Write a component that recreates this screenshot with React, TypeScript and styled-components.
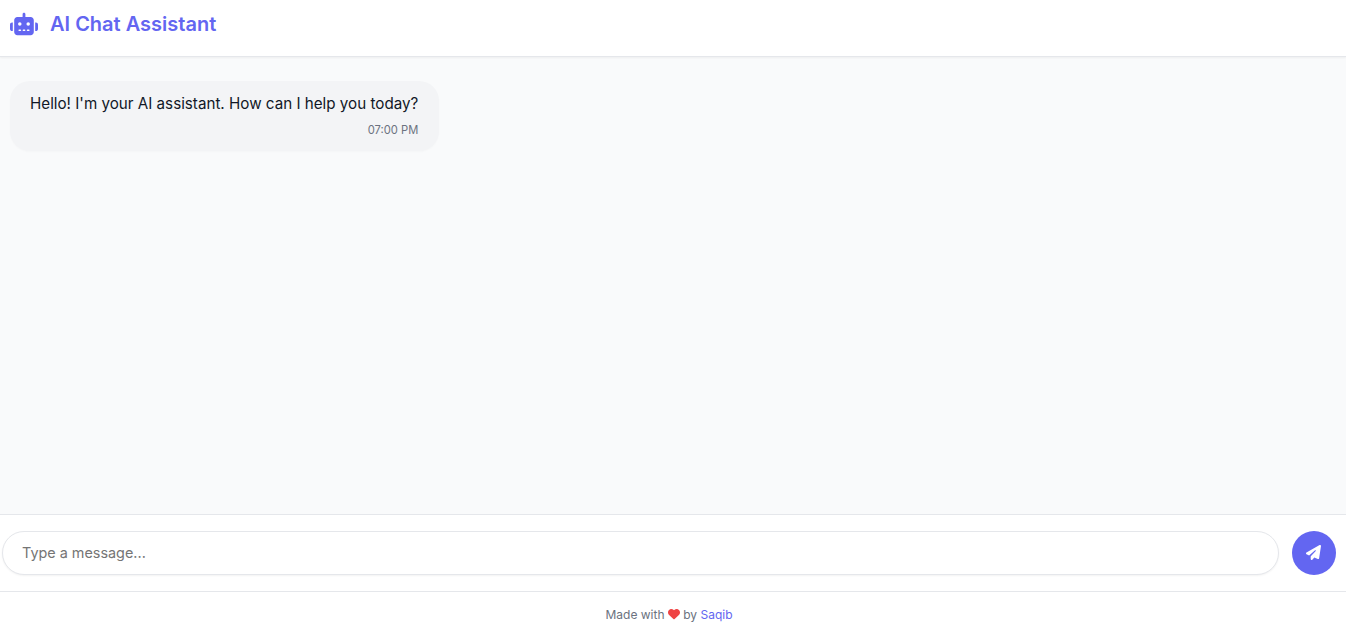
import React from "react"
import styled, { createGlobalStyle } from "styled-components"
import { FaRobot, FaPaperPlane, FaHeart } from "react-icons/fa6"

const GlobalStyle = createGlobalStyle`
  html, body {
    margin: 0;
    padding: 0;
    height: 100%;
    overflow: hidden;
    background: #ffffff;
    font-family: "Inter", "Liberation Sans", sans-serif;
  }
  * {
    box-sizing: border-box;
  }
`

const Page = styled.div`
  display: flex;
  flex-direction: column;
  height: 627px;
`

const Header = styled.header`
  display: flex;
  align-items: center;
  gap: 12px;
  flex: 0 0 57px;
  padding: 0 10px 9px;
  background: #ffffff;
  border-bottom: 1px solid #e5e7eb;
  box-shadow: 0 1px 2px rgba(0, 0, 0, 0.05);
  color: #6366f1;
  position: relative;
`

const Title = styled.h1`
  margin: 0;
  font-size: 20px;
  font-weight: 600;
  color: #6366f1;
`

const Messages = styled.main`
  flex: 1;
  padding: 24px 10px;
  background: #f9fafb;
`

const Bubble = styled.div`
  display: inline-block;
  padding: 12px 21px 12px 20px;
  background: #f3f4f6;
  border-radius: 20px;
  box-shadow: 0 1px 2px rgba(0, 0, 0, 0.02);
`

const MessageText = styled.div`
  font-size: 15.2px;
  line-height: 22px;
  color: #111827;
`

const Time = styled.div`
  margin-top: 6px;
  font-size: 11.2px;
  line-height: 18px;
  text-align: right;
  color: #6b7280;
`

const Composer = styled.div`
  display: flex;
  align-items: center;
  gap: 13px;
  flex: 0 0 78px;
  padding: 16px 10px 16px 2px;
  background: #ffffff;
  border-top: 1px solid #e5e7eb;
  border-bottom: 1px solid #e5e7eb;
`

const Input = styled.input`
  flex: 1;
  height: 44px;
  padding: 0 19px 2px;
  border: 1px solid #e5e7eb;
  border-radius: 22px;
  outline: none;
  background: #ffffff;
  box-shadow: 0 1px 2px rgba(0, 0, 0, 0.05);
  font-family: inherit;
  font-size: 14.4px;
  color: #111827;
  &::placeholder {
    color: #757575;
    opacity: 1;
  }
`

const SendButton = styled.button`
  display: flex;
  align-items: center;
  justify-content: center;
  flex: 0 0 44px;
  height: 44px;
  padding: 0 1px 2px 0;
  border: none;
  border-radius: 50%;
  background: #6366f1;
  color: #ffffff;
  font-size: 15px;
`

const Footer = styled.footer`
  flex: 0 0 35px;
  padding: 15px 8px 0 0;
  background: #ffffff;
  font-size: 12px;
  line-height: 16px;
  text-align: center;
  color: #6b7280;
`

const Heart = styled(FaHeart)`
  color: #ef4444;
  vertical-align: -1px;
`

const Author = styled.a`
  color: #6366f1;
  text-decoration: none;
`

const App = () => {
  return (
    <Page>
      <GlobalStyle />
      <Header>
        <FaRobot size={28} />
        <Title>AI Chat Assistant</Title>
      </Header>
      <Messages>
        <Bubble>
          <MessageText>Hello! I'm your AI assistant. How can I help you today?</MessageText>
          <Time>07:00 PM</Time>
        </Bubble>
      </Messages>
      <Composer>
        <Input placeholder="Type a message..." />
        <SendButton>
          <FaPaperPlane />
        </SendButton>
      </Composer>
      <Footer>
        Made with <Heart size={12} /> by <Author href="#">Saqib</Author>
      </Footer>
    </Page>
  )
}

export default App
